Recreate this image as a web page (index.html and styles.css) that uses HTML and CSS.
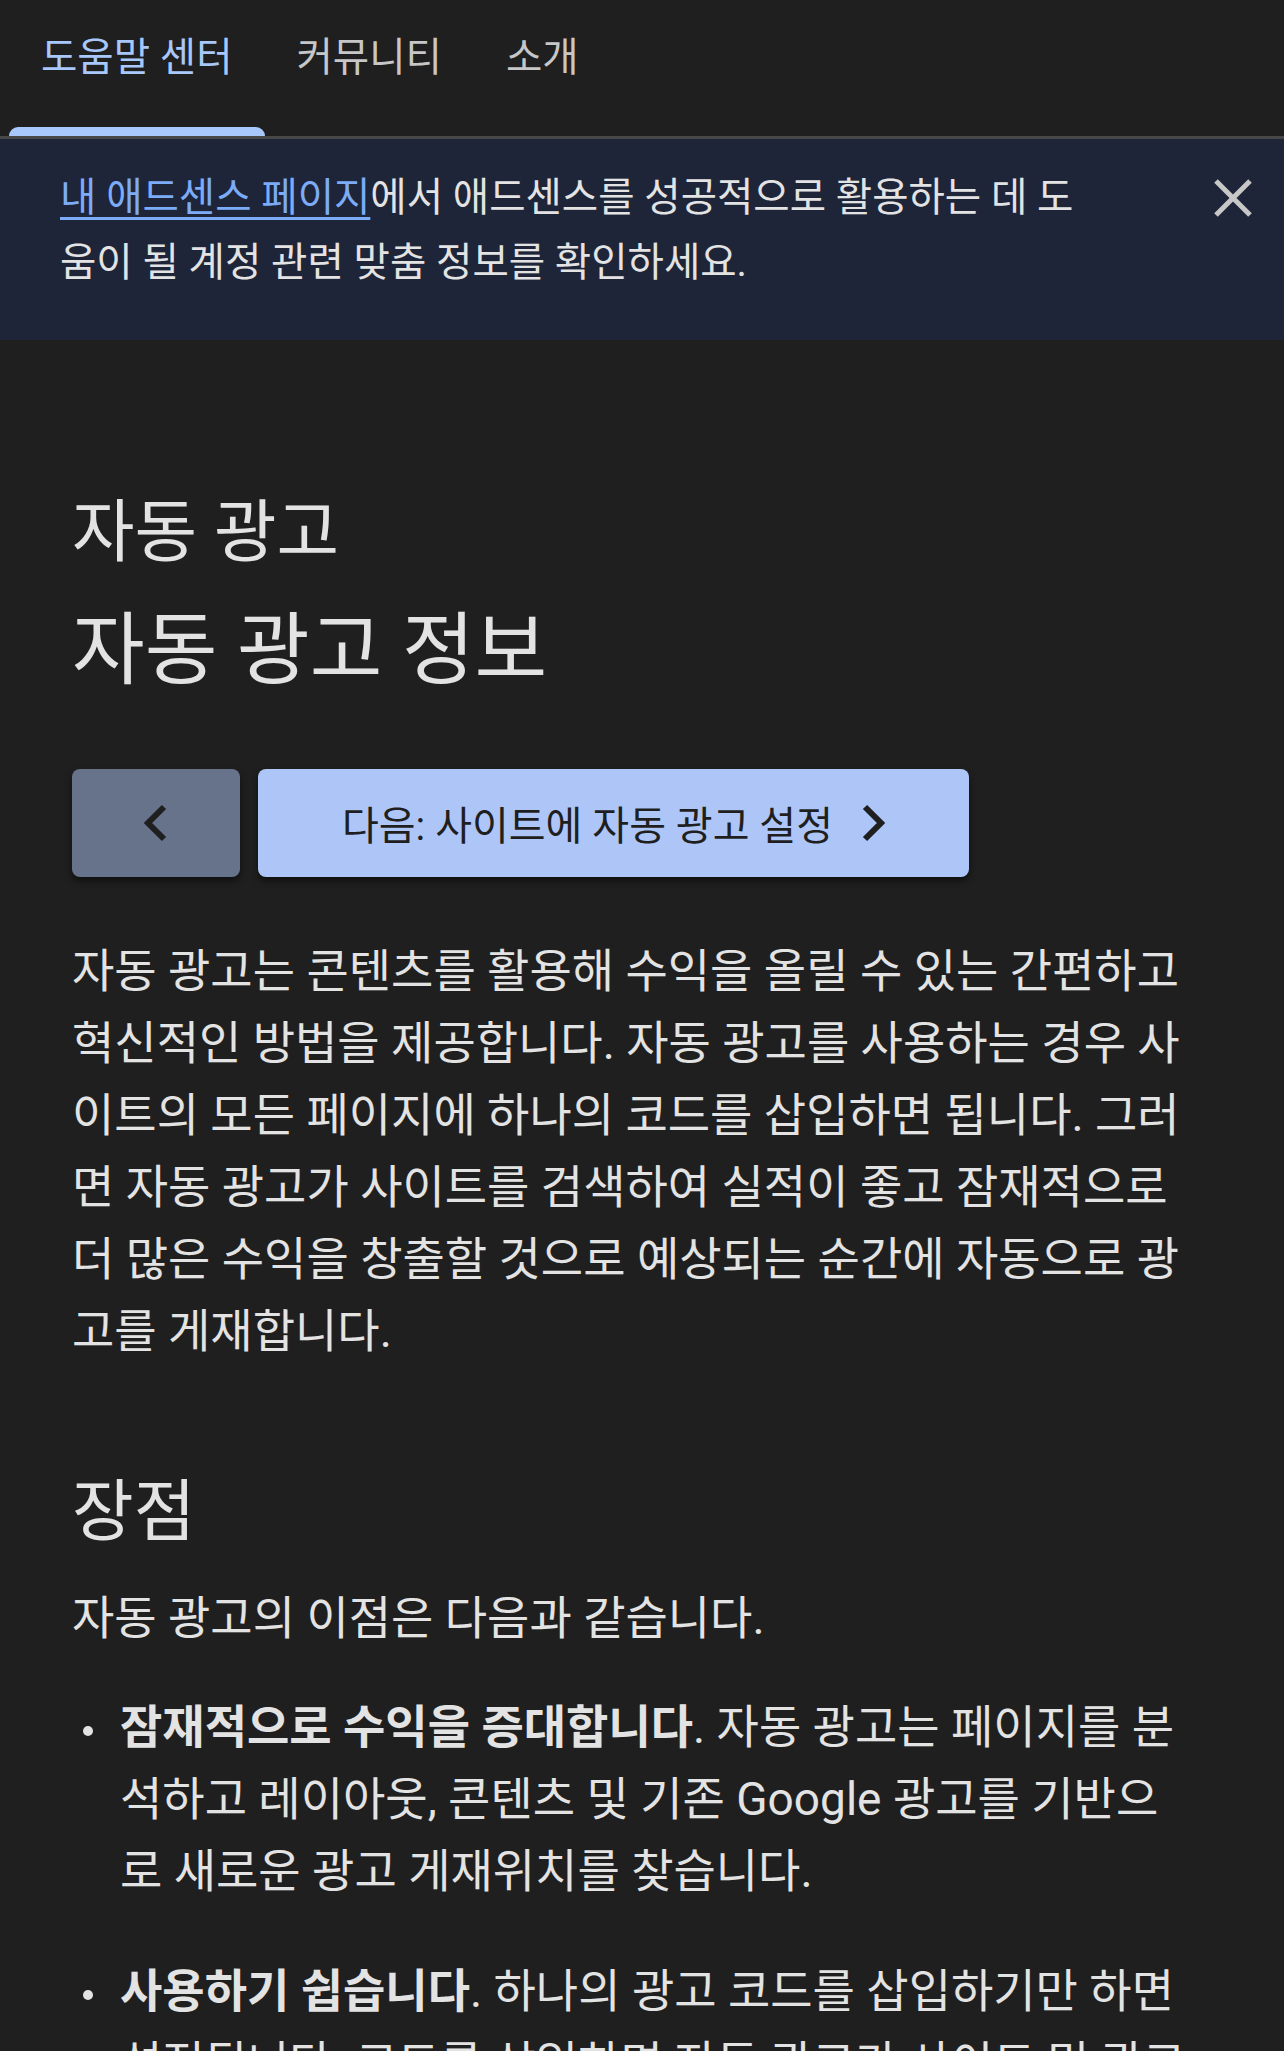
FILE: index.html
```html
<!DOCTYPE html>
<html lang="ko">
<head>
    <meta charset="UTF-8">
    <meta name="viewport" content="width=device-width, initial-scale=1.0">
    <title>자동 광고 정보 - 애드센스 고객센터</title>
    <link rel="stylesheet" href="styles.css">
</head>
<body>
    <!-- 상단 탭 -->
    <nav class="tabs">
        <a class="tab active" href="#">도움말 센터</a>
        <a class="tab" href="#">커뮤니티</a>
        <a class="tab" href="#">소개</a>
    </nav>

    <!-- 안내 배너 -->
    <div class="banner">
        <p class="banner-text"><a href="#">내 애드센스 페이지</a>에서 애드센스를 성공적으로 활용하는 데 도움이 될 계정 관련 맞춤 정보를 확인하세요.</p>
        <button class="banner-close" aria-label="닫기">
            <svg width="40" height="40" viewBox="0 0 40 40">
                <path d="M3 3 L37 37 M37 3 L3 37" stroke="#c7c7c7" stroke-width="5" fill="none" />
            </svg>
        </button>
    </div>

    <main class="article">
        <div class="crumb">자동 광고</div>
        <h1>자동 광고 정보</h1>

        <div class="pager">
            <a class="pager-prev" href="#" aria-label="이전">
                <svg width="24" height="38" viewBox="0 0 24 38">
                    <polyline points="20,3 4,19 20,35" stroke="#1f1f1f" stroke-width="6" fill="none" />
                </svg>
            </a>
            <a class="pager-next" href="#">
                <span>다음: 사이트에 자동 광고 설정</span>
                <svg width="24" height="38" viewBox="0 0 24 38">
                    <polyline points="4,3 20,19 4,35" stroke="#1f1f1f" stroke-width="6" fill="none" />
                </svg>
            </a>
        </div>

        <p class="lead">자동 광고는 콘텐츠를 활용해 수익을 올릴 수 있는 간편하고 혁신적인 방법을 제공합니다. 자동 광고를 사용하는 경우 사이트의 모든 페이지에 하나의 코드를 삽입하면 됩니다. 그러면 자동 광고가 사이트를 검색하여 실적이 좋고 잠재적으로 더 많은 수익을 창출할 것으로 예상되는 순간에 자동으로 광고를 게재합니다.</p>

        <h2>장점</h2>
        <p class="intro">자동 광고의 이점은 다음과 같습니다.</p>
        <ul class="benefits">
            <li><strong>잠재적으로 수익을 증대합니다</strong>. 자동 광고는 페이지를 분석하고 레이아웃, 콘텐츠 및 기존 Google 광고를 기반으로 새로운 광고 게재위치를 찾습니다.</li>
            <li><strong>사용하기 쉽습니다</strong>. 하나의 광고 코드를 삽입하기만 하면 설정됩니다. 코드를 삽입하면 자동 광고가 사이트 및 광고 게재위치를 분석하고 적절한 시점에 광고를 게재합니다.</li>
        </ul>
    </main>
</body>
</html>
```

FILE: styles.css
```css
* {
  margin: 0;
  padding: 0;
  box-sizing: border-box;
}
body {
  background: #1f1f1f;
  color: #e3e3e3;
  font-family: "Roboto", "Noto Sans CJK KR", sans-serif;
}
a {
  text-decoration: none;
}

/* 탭 */
.tabs {
  display: flex;
  height: 139px;
  padding-left: 9px;
  border-bottom: 3px solid #474747;
}
.tab {
  position: relative;
  padding: 34px 32px 0;
  font-size: 39.5px;
  line-height: 48px;
  color: #c7c7c7;
}
.tab.active {
  color: #a8c7fa;
}
.tab.active::after {
  content: "";
  position: absolute;
  left: 0;
  right: 0;
  bottom: 0;
  height: 9px;
  background: #a8c7fa;
  border-radius: 9px 9px 0 0;
}

/* 배너 */
.banner {
  display: flex;
  align-items: flex-start;
  gap: 123px;
  background: #1e2538;
  padding: 26px 31px 45px 60px;
}
.banner-text {
  flex: 1;
  font-size: 39.5px;
  line-height: 65px;
  color: #e3e3e3;
}
.banner-text a {
  color: #7cacf8;
  text-decoration: underline;
  text-decoration-thickness: 3px;
  text-underline-offset: 6px;
}
.banner-close {
  width: 40px;
  height: 40px;
  margin-top: 13px;
  border: none;
  background: none;
  cursor: pointer;
}

/* 본문 */
.article {
  padding: 153px 86px 0 72px;
}
.crumb {
  font-size: 68px;
  line-height: 80px;
}
h1 {
  margin-top: 34px;
  font-size: 79px;
  line-height: 88px;
  font-weight: 400;
}
.pager {
  display: flex;
  gap: 18px;
  margin-top: 74px;
}
.pager a {
  display: flex;
  align-items: center;
  justify-content: center;
  height: 108px;
  border-radius: 8px;
  box-shadow: 0 4px 6px rgba(0, 0, 0, 0.5);
}
.pager-prev {
  width: 168px;
  background: #67738a;
}
.pager-next {
  width: 711px;
  gap: 28px;
  background: #adc6f7;
  color: #1f1f1f;
  font-size: 40px;
}
.lead {
  margin-top: 58px;
  font-size: 46px;
  line-height: 72px;
}
h2 {
  margin-top: 105px;
  font-size: 67px;
  line-height: 80px;
  font-weight: 400;
}
.intro {
  margin-top: 30px;
  font-size: 46px;
  line-height: 72px;
}
.benefits {
  list-style: none;
  margin-top: 37px;
  padding-left: 48px;
}
.benefits li {
  position: relative;
  font-size: 46px;
  line-height: 72px;
  margin-bottom: 48px;
}
.benefits li::before {
  content: "";
  position: absolute;
  left: -37px;
  top: 35px;
  width: 10px;
  height: 10px;
  border-radius: 50%;
  background: #e3e3e3;
}
.benefits strong {
  font-weight: 700;
}
```
